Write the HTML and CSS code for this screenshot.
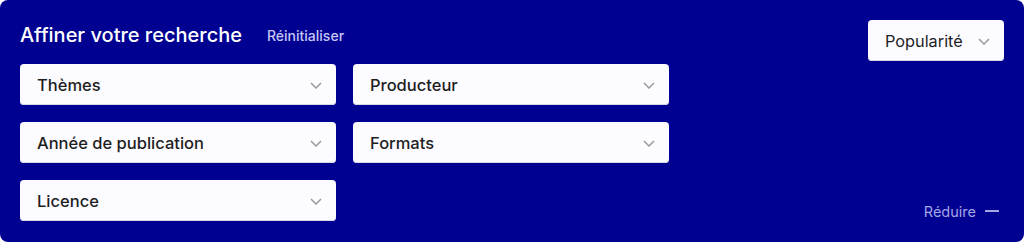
FILE: index.html
```html
<!DOCTYPE html>
<html lang="fr">
<head>
<meta charset="utf-8">
<link rel="stylesheet" href="styles.css">
</head>
<body>
<div class="panel">
  <div class="main">
    <div class="header">
      <h2 class="title">Affiner votre recherche</h2>
      <span class="reset">Réinitialiser</span>
    </div>
    <div class="grid">
      <div class="select"><span>Thèmes</span><svg class="chev" viewBox="0 0 12 7"><path d="M1 1l5 5 5-5"/></svg></div>
      <div class="select"><span>Producteur</span><svg class="chev" viewBox="0 0 12 7"><path d="M1 1l5 5 5-5"/></svg></div>
      <div class="select"><span>Année de publication</span><svg class="chev" viewBox="0 0 12 7"><path d="M1 1l5 5 5-5"/></svg></div>
      <div class="select"><span>Formats</span><svg class="chev" viewBox="0 0 12 7"><path d="M1 1l5 5 5-5"/></svg></div>
      <div class="select"><span>Licence</span><svg class="chev" viewBox="0 0 12 7"><path d="M1 1l5 5 5-5"/></svg></div>
    </div>
  </div>
  <div class="side">
    <div class="select sort"><span>Popularité</span><svg class="chev" viewBox="0 0 12 7"><path d="M1 1l5 5 5-5"/></svg></div>
    <div class="collapse"><span>Réduire</span><span class="dash"></span></div>
  </div>
</div>
</body>
</html>
```
FILE: styles.css
```css
html, body {
  margin: 0;
  padding: 0;
  background: #ffffff;
}
body {
  font-family: Inter, "Noto Sans", sans-serif;
}
.panel {
  box-sizing: border-box;
  width: 1024px;
  height: 242px;
  background: #000091;
  border-radius: 8px;
  padding: 20px 20px 21px 20px;
  display: flex;
  justify-content: space-between;
}
.main {
  display: flex;
  flex-direction: column;
}
.header {
  height: 30px;
  margin-bottom: 14px;
  display: flex;
  align-items: center;
  gap: 25px;
}
.title {
  margin: 0;
  color: #ffffff;
  font-size: 20px;
  font-weight: 500;
  letter-spacing: 0;
}
.reset {
  color: #c6c6f5;
  font-size: 14px;
  font-weight: 500;
  margin-top: 1px;
}
.grid {
  display: grid;
  grid-template-columns: 316px 316px;
  grid-auto-rows: 41px;
  column-gap: 17px;
  row-gap: 17px;
}
.select {
  box-sizing: border-box;
  background: #fcfbff;
  border-radius: 4px;
  box-shadow: inset 0 -1px 0 #d6d6e6;
  display: flex;
  align-items: center;
  justify-content: space-between;
  padding: 1px 14px 0 17px;
  color: #1e1e1e;
  font-size: 16.5px;
  font-weight: 500;
}
.chev {
  width: 12px;
  height: 7px;
  fill: none;
  stroke: #9a9a9a;
  stroke-width: 1.5;
}
.side {
  display: flex;
  flex-direction: column;
  justify-content: space-between;
  align-items: flex-end;
}
.sort {
  width: 136px;
  height: 41px;
  font-weight: 400;
  font-size: 16.3px;
}
.collapse {
  display: flex;
  align-items: center;
  gap: 9px;
  height: 20px;
  padding-right: 5px;
  color: #a6a6e6;
  font-size: 14.5px;
}
.dash {
  display: block;
  width: 14px;
  height: 2px;
  background: #a6a6e6;
}
```
